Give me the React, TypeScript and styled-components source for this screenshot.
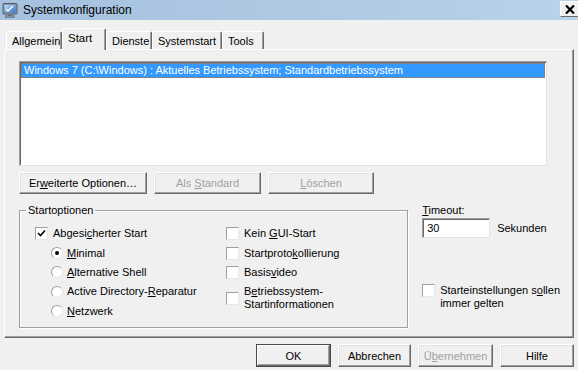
import React from 'react';
import styled, { createGlobalStyle, css } from 'styled-components';

const GlobalStyle = createGlobalStyle`
    html, body {
        margin: 0;
        padding: 0;
        background: #f0f0f0;
    }
    body {
        font-family: 'Liberation Sans', Arial, sans-serif;
        font-size: 11px;
        color: #000;
    }
`;

type TabDef = { label: string; width: number; active?: boolean };

const tabs: Array<TabDef> = [
    { label: 'Allgemein', width: 56 },
    { label: 'Start', width: 44, active: true },
    { label: 'Dienste', width: 46 },
    { label: 'Systemstart', width: 70 },
    { label: 'Tools', width: 42 },
];

const AppIcon = () => (
    <svg width="16" height="16" viewBox="0 0 16 16">
        <defs>
            <linearGradient id="scr" x1="0" y1="0" x2="1" y2="1">
                <stop offset="0" stopColor="#bfe0ff" />
                <stop offset="1" stopColor="#2d6fc4" />
            </linearGradient>
        </defs>
        <rect x="1" y="1.5" width="14" height="10.5" rx="1" fill="#8a97a8" stroke="#4d5a6c" />
        <rect x="2.5" y="3" width="11" height="7.5" fill="url(#scr)" />
        <polyline points="4,7 6,9 11,4" fill="none" stroke="#fff" strokeWidth="1.3" />
        <rect x="6" y="12" width="4" height="2" fill="#6d7a8c" />
        <rect x="3.5" y="13.8" width="9" height="1.6" fill="#8a97a8" stroke="#4d5a6c" strokeWidth="0.5" />
    </svg>
);

const CheckMark = () => (
    <svg width="9" height="9" viewBox="0 0 9 9">
        <polyline points="1,4 3.5,6.5 8,1.5" fill="none" stroke="#000" strokeWidth="1.6" />
    </svg>
);

const App = () => {
    return (
        <Window>
            <GlobalStyle />
            <TitleBar>
                <AppIcon />
                <Title>Systemkonfiguration</Title>
                <CloseButton>
                    <svg width="10" height="9" viewBox="0 0 10 9">
                        <path d="M1 0.5 L9 8.5 M9 0.5 L1 8.5" stroke="#000" strokeWidth="2.2" />
                    </svg>
                </CloseButton>
            </TitleBar>
            <Body>
                <TabStrip>
                    {tabs.map((tab) => (
                        <Tab key={tab.label} $width={tab.width} $active={tab.active}>
                            {tab.label}
                        </Tab>
                    ))}
                </TabStrip>
                <Panel>
                    <ListBox>
                        <ListItem $selected>
                            Windows 7 (C:\Windows) : Aktuelles Betriebssystem; Standardbetriebssystem
                        </ListItem>
                    </ListBox>
                    <ButtonRow>
                        <Button $width={128}>
                            Er<Key>w</Key>eiterte Optionen…
                        </Button>
                        <Button $width={107} disabled>
                            Als <Key>S</Key>tandard
                        </Button>
                        <Button $width={106} disabled>
                            <Key>L</Key>öschen
                        </Button>
                    </ButtonRow>
                    <LowerSection>
                        <GroupBox>
                            <Legend>Startoptionen</Legend>
                            <GroupColumns>
                                <OptionList>
                                    <Option>
                                        <CheckBox>
                                            <CheckMark />
                                        </CheckBox>
                                        <span>
                                            Abgesi<Key>c</Key>herter Start
                                        </span>
                                    </Option>
                                    <Option $indent>
                                        <Radio $checked />
                                        <span>
                                            <Key>M</Key>inimal
                                        </span>
                                    </Option>
                                    <Option $indent>
                                        <Radio />
                                        <span>
                                            <Key>A</Key>lternative Shell
                                        </span>
                                    </Option>
                                    <Option $indent>
                                        <Radio />
                                        <span>
                                            Active Directory-<Key>R</Key>eparatur
                                        </span>
                                    </Option>
                                    <Option $indent>
                                        <Radio />
                                        <span>
                                            <Key>N</Key>etzwerk
                                        </span>
                                    </Option>
                                </OptionList>
                                <OptionList>
                                    <Option>
                                        <CheckBox />
                                        <span>
                                            Kein <Key>G</Key>UI-Start
                                        </span>
                                    </Option>
                                    <Option>
                                        <CheckBox />
                                        <span>
                                            Startproto<Key>k</Key>ollierung
                                        </span>
                                    </Option>
                                    <Option>
                                        <CheckBox />
                                        <span>
                                            Basis<Key>v</Key>ideo
                                        </span>
                                    </Option>
                                    <Option $tall>
                                        <CheckBox />
                                        <span>
                                            B<Key>e</Key>triebssystem-
                                            <br />
                                            Startinformationen
                                        </span>
                                    </Option>
                                </OptionList>
                            </GroupColumns>
                        </GroupBox>
                        <SideColumn>
                            <FieldLabel>
                                <Key>T</Key>imeout:
                            </FieldLabel>
                            <TimeoutRow>
                                <TextInput>30</TextInput>
                                <span>Sekunden</span>
                            </TimeoutRow>
                            <PersistOption>
                                <CheckBox />
                                <span>
                                    Starteinstellungen s<Key>o</Key>llen
                                    <br />
                                    immer gelten
                                </span>
                            </PersistOption>
                        </SideColumn>
                    </LowerSection>
                </Panel>
                <Footer>
                    <Button $width={75} $tall $default>
                        OK
                    </Button>
                    <Button $width={73} $tall>
                        Abbrechen
                    </Button>
                    <Button $width={75} $tall disabled>
                        Ü<Key>b</Key>ernehmen
                    </Button>
                    <Button $width={74} $tall>
                        Hilfe
                    </Button>
                </Footer>
            </Body>
        </Window>
    );
};

const Window = styled.div`
    width: 578px;
    height: 370px;
    overflow: hidden;
    display: flex;
    flex-direction: column;
    background: #f0f0f0;
`;

const TitleBar = styled.div`
    height: 20px;
    flex-shrink: 0;
    display: flex;
    align-items: center;
    padding-left: 2px;
    background: linear-gradient(to right, #a5c1df, #b3cce6 70%, #bad3ec);
`;

const Title = styled.span`
    margin-left: 5px;
    font-size: 12px;
    color: #000;
`;

const CloseButton = styled.div`
    margin-left: auto;
    align-self: flex-start;
    margin-top: 1px;
    width: 18px;
    height: 16px;
    box-sizing: border-box;
    display: flex;
    align-items: center;
    justify-content: center;
    background: #f0f0f0;
    border-top: 1px solid #fff;
    border-left: 1px solid #fff;
    border-bottom: 1px solid #696969;
`;

const Body = styled.div`
    flex: 1;
    display: flex;
    flex-direction: column;
    padding: 8px 4px 3px 4px;
    min-height: 0;
`;

const TabStrip = styled.div`
    display: flex;
    align-items: flex-end;
    height: 21px;
    padding-left: 2px;
    position: relative;
    z-index: 1;
`;

const Tab = styled.div<{ $width: number; $active?: boolean }>`
    width: ${(p) => p.$width}px;
    box-sizing: border-box;
    height: ${(p) => (p.$active ? 22 : 18)}px;
    margin-bottom: ${(p) => (p.$active ? -1 : 0)}px;
    padding: 0 0 ${(p) => (p.$active ? 4 : 0)}px 5px;
    display: flex;
    align-items: center;
    background: #f0f0f0;
    border-top: 1px solid #fff;
    border-left: 1px solid #fff;
    border-right: 1px solid #696969;
    box-shadow: inset -1px 0 0 #a0a0a0;
    border-radius: 2px 2px 0 0;
    font-size: ${(p) => (p.$active ? 11.5 : 11)}px;
`;

const Panel = styled.div`
    flex: 1;
    display: flex;
    flex-direction: column;
    padding: 11px 13px 9px 14px;
    border-top: 1px solid #fff;
    border-left: 1px solid #fff;
    border-right: 1px solid #696969;
    border-bottom: 1px solid #696969;
    box-shadow: inset -1px -1px 0 #a0a0a0;
`;

const ListBox = styled.div`
    height: 105px;
    width: 528px;
    box-sizing: border-box;
    background: #fff;
    border-top: 1px solid #a0a0a0;
    border-left: 1px solid #a0a0a0;
    border-right: 1px solid #e3e3e3;
    border-bottom: 1px solid #e3e3e3;
    box-shadow: inset 1px 1px 0 #696969;
    padding: 1px 1px 0 1px;
`;

const ListItem = styled.div<{ $selected?: boolean }>`
    height: 15px;
    box-sizing: border-box;
    line-height: 13px;
    padding-left: 2px;
    white-space: nowrap;
    ${(p) =>
        p.$selected &&
        css`
            background: #3399ff;
            color: #fff;
            border: 1px dotted #c86a1e;
        `}
`;

const ButtonRow = styled.div`
    display: flex;
    gap: 7px;
    margin-top: 6px;
`;

const Button = styled.button<{ $width: number; $tall?: boolean; $default?: boolean }>`
    width: ${(p) => p.$width}px;
    height: ${(p) => (p.$tall ? 23 : 22)}px;
    padding: 0;
    font-family: inherit;
    font-size: 11px;
    color: #000;
    background: #f0f0f0;
    border-top: 1px solid #fff;
    border-left: 1px solid #fff;
    border-right: 1px solid #696969;
    border-bottom: 1px solid #696969;
    box-shadow: inset -1px -1px 0 #a0a0a0, inset 1px 1px 0 #e3e3e3;
    ${(p) =>
        p.$default &&
        css`
            border: 1px solid #4a4a4a;
            box-shadow: inset -1px -1px 0 #696969, inset 1px 1px 0 #fff, inset -2px -2px 0 #a0a0a0;
        `}

    &:disabled {
        color: #a0a0a0;
    }
`;

const Key = styled.span`
    text-decoration: underline;
    text-underline-offset: 1px;
`;

const LowerSection = styled.div`
    flex: 1;
    display: flex;
    gap: 14px;
    margin-top: 10px;
`;

const GroupBox = styled.fieldset`
    margin: 0;
    width: 391px;
    box-sizing: border-box;
    padding: 7px 8px 0 6px;
    min-width: 0;
    border: 1px solid #a0a0a0;
    box-shadow: 1px 1px 0 #fff, inset 1px 1px 0 #fff;
`;

const Legend = styled.legend`
    margin-left: 0;
    padding: 0 2px;
    line-height: 13px;
`;

const GroupColumns = styled.div`
    display: grid;
    grid-template-columns: 191px 1fr;
    padding-left: 9px;
`;

const OptionList = styled.div`
    display: flex;
    flex-direction: column;
`;

const Option = styled.div<{ $indent?: boolean; $tall?: boolean }>`
    display: flex;
    align-items: center;
    gap: ${(p) => (p.$indent ? 4 : 5)}px;
    height: ${(p) => (p.$tall ? 32 : 19.4)}px;
    padding-left: ${(p) => (p.$indent ? 16 : 0)}px;
    line-height: 13px;
    white-space: nowrap;
`;

const CheckBox = styled.span`
    flex-shrink: 0;
    width: 13px;
    height: 13px;
    box-sizing: border-box;
    display: inline-flex;
    align-items: center;
    justify-content: center;
    background: #fff;
    border-top: 1px solid #a0a0a0;
    border-left: 1px solid #a0a0a0;
    border-right: 1px solid #e8e8e8;
    border-bottom: 1px solid #e8e8e8;
`;

const Radio = styled.span<{ $checked?: boolean }>`
    flex-shrink: 0;
    width: 12px;
    height: 12px;
    box-sizing: border-box;
    border-radius: 50%;
    display: inline-flex;
    align-items: center;
    justify-content: center;
    background: #fff;
    border: 1px solid;
    border-color: #a0a0a0 #e8e8e8 #e8e8e8 #a0a0a0;

    &::after {
        content: '';
        width: 4px;
        height: 4px;
        border-radius: 50%;
        background: ${(p) => (p.$checked ? '#000' : 'transparent')};
    }
`;

const SideColumn = styled.div`
    display: flex;
    flex-direction: column;
    white-space: nowrap;
`;

const FieldLabel = styled.div`
    line-height: 13px;
    margin-top: 0;
`;

const TimeoutRow = styled.div`
    display: flex;
    align-items: center;
    gap: 7px;
    margin-top: 1px;
`;

const TextInput = styled.div`
    width: 68px;
    height: 20px;
    box-sizing: border-box;
    padding: 3px 0 0 4px;
    background: #fff;
    border-top: 1px solid #a0a0a0;
    border-left: 1px solid #a0a0a0;
    border-right: 1px solid #e3e3e3;
    border-bottom: 1px solid #e3e3e3;
    box-shadow: inset 1px 1px 0 #696969;
    line-height: 13px;
`;

const PersistOption = styled.div`
    display: flex;
    align-items: flex-start;
    gap: 5px;
    margin-top: 46px;
    line-height: 13px;
`;

const Footer = styled.div`
    display: flex;
    justify-content: flex-end;
    gap: 7px;
    margin-top: 6px;
    height: 23px;
    flex-shrink: 0;
`;

export default App;
